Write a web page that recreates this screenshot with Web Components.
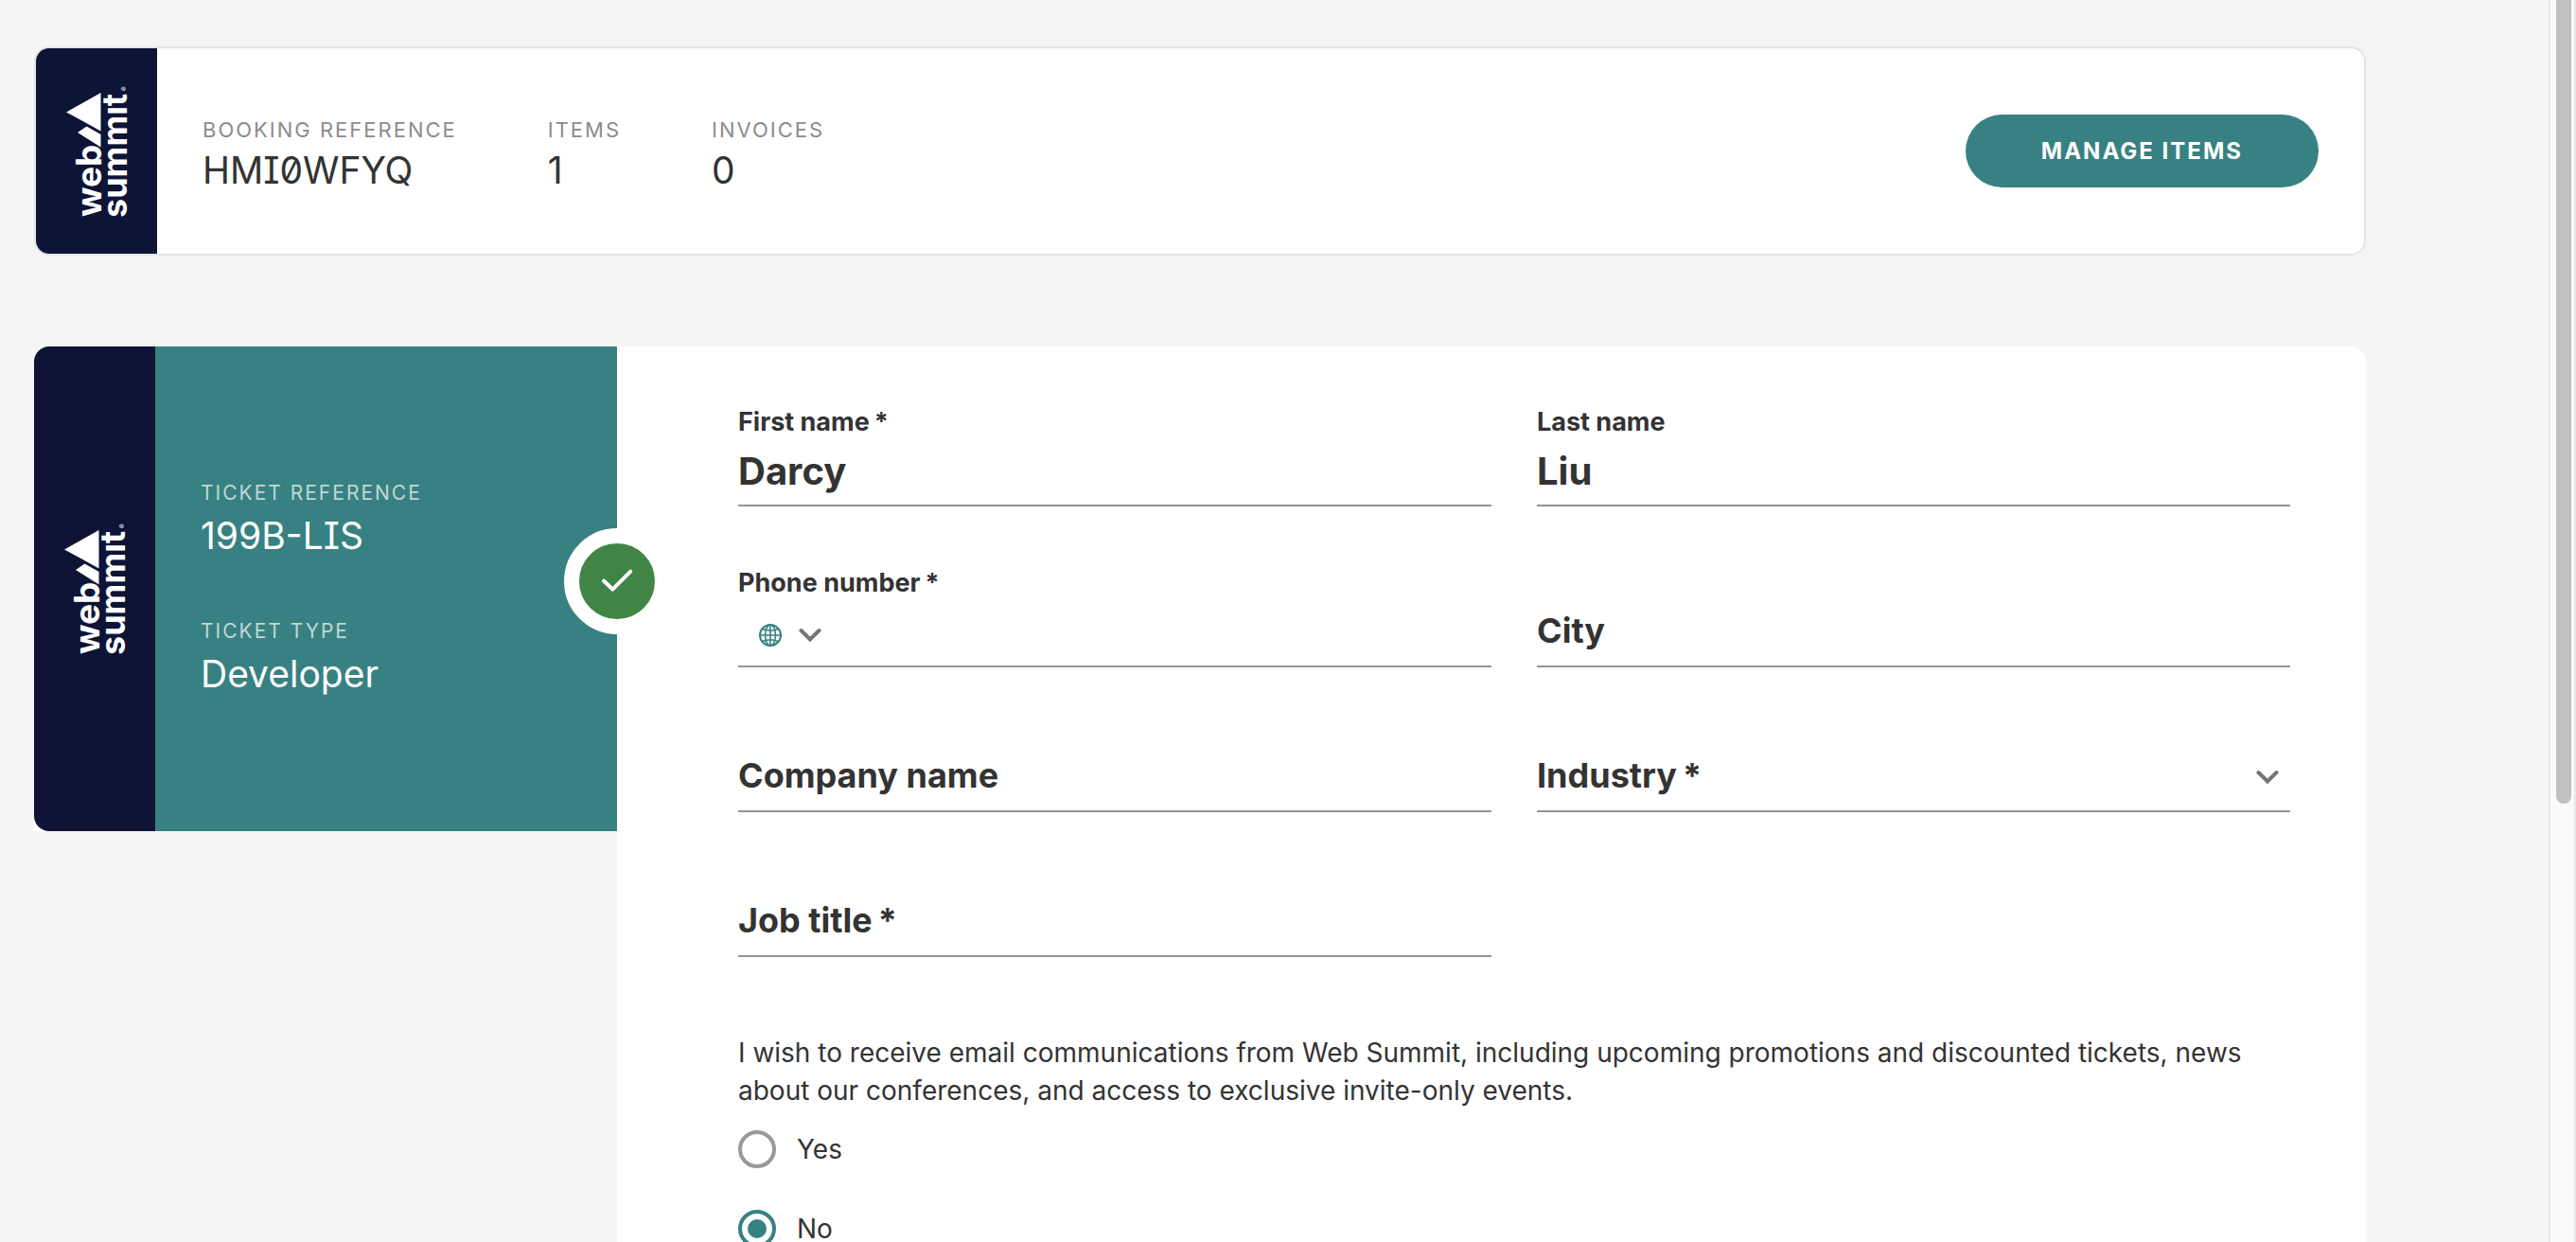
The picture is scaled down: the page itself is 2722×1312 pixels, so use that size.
<!DOCTYPE html>
<html lang="en">
<head>
<meta charset="utf-8">
<title>Web Summit – Booking</title>
<style>
  body { margin: 0; background: #f5f5f5; color: #333; font-family: Inter, "Liberation Sans", sans-serif; font-size: 28px; line-height: 40px; }
</style>
</head>
<body>
<booking-page>
  <booking-summary>
    <info-item label="Booking reference" coded>HMI0WFYQ</info-item>
    <info-item label="Items">1</info-item>
    <info-item label="Invoices">0</info-item>
  </booking-summary>
  <ticket-card>
    <info-item slot="ticket" label="Ticket reference" coded>199B-LIS</info-item>
    <info-item slot="ticket" label="Ticket type">Developer</info-item>
    <form-field label="First name" required value="Darcy"></form-field>
    <form-field label="Last name" value="Liu"></form-field>
    <phone-field label="Phone number"></phone-field>
    <form-field label="City"></form-field>
    <form-field label="Company name"></form-field>
    <select-field label="Industry"></select-field>
    <form-field label="Job title" required></form-field>
    <consent-question slot="consent">I wish to receive email communications from Web Summit, including upcoming promotions and discounted tickets, news about our conferences, and access to exclusive invite-only events.</consent-question>
  </ticket-card>
</booking-page>

<script>
const define = (name, render) => customElements.define(name, class extends HTMLElement {
  constructor() {
    super();
    this.attachShadow({ mode: 'open' });
  }
  connectedCallback() {
    this.shadowRoot.innerHTML = '<style>*{box-sizing:border-box}</style>' + render(this);
  }
});

const star = el => el.hasAttribute('required') ? '<span class="star">*</span>' : '';

const chevron = '<svg width="24" height="16" viewBox="0 0 24 16" fill="none" stroke="#757575" stroke-width="4" stroke-linecap="round"><path d="m2.500 3 9.500 9.500L21.500 3"/></svg>';

const fieldStyle = `
  :host { display: block; align-self: end; min-width: 0; }
  .field { display: flex; flex-direction: column; border-bottom: 2px solid #949494; }
  label { font-weight: 700; font-size: 27px; line-height: 32px; }
  .star { margin-left: 5px; }
  input, select { width: 100%; margin: 0; padding: 0; border: 0; outline: 0; background: none; color: #333;
    font-family: inherit; font-weight: 700; font-size: 40px; height: 71px; appearance: none; }
  .empty { display: grid; }
  .empty > * { grid-area: 1 / 1; }
  .empty label { align-self: start; padding-top: 27px; font-size: 36px; line-height: 44px; pointer-events: none; }
  .empty .star { margin-left: 6px; }
  .empty input, .empty select { height: 86px; }`;

define('summit-logo', () => `
  <style>
    :host { display: flex; flex: none; width: 128px; align-items: center; justify-content: center; background: #0d1436; }
    svg { display: block; }
    text { font-family: Inter, sans-serif; font-weight: 700; fill: #fff; }
  </style>
  <svg width="64" height="138" viewBox="0 0 64 138" role="img" aria-label="Web Summit" overflow="visible">
    <g transform="translate(0 138) rotate(-90)">
      <text x="0" y="36.5" font-size="37">web</text>
      <text x="-1" y="63.5" font-size="36">summıt</text>
      <text x="133" y="63.5" font-size="7">®</text>
      <path fill="#fff" d="M110.500 0 131 36.500H90.500l10-18ZM95.500 21.500 87 36.500H73.500L89 12Z"/>
    </g>
  </svg>`);

define('info-item', el => `
  <style>
    :host { display: block; }
    dl, dd { margin: 0; }
    dt { font-size: var(--label-size, 22px); line-height: var(--label-line, 40px); letter-spacing: 2px; text-transform: uppercase; color: var(--label-color, #8c8c8c); }
    dd { font-size: 39px; line-height: var(--value-line, 46px); }
    :host([coded]) dd { font-feature-settings: "ss02"; }
  </style>
  <dl><dt>${el.getAttribute('label')}</dt><dd><slot></slot></dd></dl>`);

define('booking-summary', () => `
  <style>
    :host { display: flex; border: 2px solid #e4e4e4; border-radius: 16px; background: #fff; overflow: hidden; min-height: 221px; box-sizing: border-box; }
    .body { flex: 1; display: flex; align-items: center; justify-content: space-between; padding: 0 48px; }
    .items { display: flex; gap: 96px; }
    button { border: 0; border-radius: 40px; background: #388182; color: #fff; padding: 24px 80px; font: 700 24px/29px Inter, sans-serif; letter-spacing: 2px; text-transform: uppercase; }
  </style>
  <summit-logo></summit-logo>
  <div class="body"><div class="items"><slot></slot></div><button type="button">Manage items</button></div>`);

define('ticket-card', () => `
  <style>
    :host { display: flex; align-items: flex-start; }
    aside { position: relative; display: flex; flex: none; width: 616px; height: 512px; background: #fff; border-top-left-radius: 16px; }
    summit-logo { border-radius: 16px 0 0 16px; }
    .ticket { flex: 1; display: flex; flex-direction: column; justify-content: center; gap: 56px; padding: 0 48px; background: #388182; color: #fff;
      --label-color: #c0d8d8; --label-size: 21px; --label-line: 34px; --value-line: 56px; }
    .check { position: absolute; right: -56px; top: 192px; width: 112px; height: 112px; border: 16px solid #fff; border-radius: 50%; background: #408545; }
    .check svg { display: block; }
    form { flex: 1; min-width: 0; background: #fff; border-top-right-radius: 16px; padding: 64px 80px 80px 128px; }
    .grid { display: grid; grid-template-columns: 1fr 1fr; column-gap: 48px; row-gap: 65px; margin-bottom: 81px; }
  </style>
  <aside>
    <summit-logo></summit-logo>
    <div class="ticket"><slot name="ticket"></slot></div>
    <div class="check"><svg width="80" height="80" viewBox="0 0 80 80" fill="none" stroke="#fff" stroke-width="4" stroke-linecap="round" stroke-linejoin="round"><path d="M26 39.500 35.300 48.700 54.300 29.700"/></svg></div>
  </aside>
  <form><div class="grid"><slot></slot></div><slot name="consent"></slot></form>`);

define('form-field', el => `
  <style>${fieldStyle}</style>
  <div class="field ${el.hasAttribute('value') ? '' : 'empty'}">
    <label for="input">${el.getAttribute('label')}${star(el)}</label>
    <input id="input" type="text" value="${el.getAttribute('value') || ''}">
  </div>`);

define('select-field', el => `
  <style>${fieldStyle}
    svg { align-self: center; justify-self: end; margin: 16px 12px 0 0; pointer-events: none; }
  </style>
  <div class="field empty">
    <label for="select">${el.getAttribute('label')}<span class="star">*</span></label>
    <select id="select"><option></option></select>
    ${chevron}
  </div>`);

define('phone-field', el => `
  <style>${fieldStyle}
    .row { display: flex; align-items: center; height: 71px; padding: 6px 0 0 22px; }
    button { display: flex; align-items: center; gap: 18px; padding: 0; border: 0; background: none; }
    .row input { flex: 1; height: 62px; margin-left: 16px; }
  </style>
  <div class="field">
    <label for="phone">${el.getAttribute('label')}<span class="star">*</span></label>
    <div class="row">
      <button type="button" aria-label="Country code">
        <svg width="24" height="24" viewBox="0 0 24 24" fill="none" stroke="#388182" stroke-width="1.600"><circle cx="12" cy="12" r="11" stroke-width="2"/><ellipse cx="12" cy="12" rx="5.500" ry="11"/><path d="M12 1v22M1 12h22M4 5.500q8 3.500 16 0M4 18.500q8-3.500 16 0"/></svg>
        ${chevron}
      </button>
      <input id="phone" type="tel">
    </div>
  </div>`);

define('consent-question', () => `
  <style>
    :host { display: block; }
    fieldset { margin: 0; padding: 0; border: 0; min-width: 0; }
    legend { padding: 0; margin-bottom: 22px; }
    .options { display: flex; flex-direction: column; gap: 44px; }
    label { display: flex; align-items: center; gap: 22px; }
    input { appearance: none; display: grid; place-items: center; width: 40px; height: 40px; margin: 0; border: 4px solid #999; border-radius: 50%; }
    input:checked { border-color: #388182; }
    input:checked::before { content: ""; width: 20px; height: 20px; border-radius: 50%; background: #388182; }
  </style>
  <fieldset>
    <legend><slot></slot></legend>
    <div class="options">
      <label><input type="radio" name="consent">Yes</label>
      <label><input type="radio" name="consent" checked>No</label>
    </div>
  </fieldset>`);

define('booking-page', () => `
  <style>
    :host { display: flex; height: 100vh; overflow: hidden; }
    main { flex: 1; min-width: 0; display: flex; flex-direction: column; gap: 96px; padding: 49px 193px 0 36px; }
    main ::slotted(*) { flex: none; }
    .track { flex: none; width: 29px; padding: 0 3px 0 6px; background: #fafafa; border: solid #e8e8e8; border-width: 0 2px; }
    .thumb { height: 849px; background: #c1c1c1; border-radius: 0 0 8px 8px; }
  </style>
  <main><slot></slot></main>
  <div class="track"><div class="thumb"></div></div>`);
</script>
</body>
</html>
